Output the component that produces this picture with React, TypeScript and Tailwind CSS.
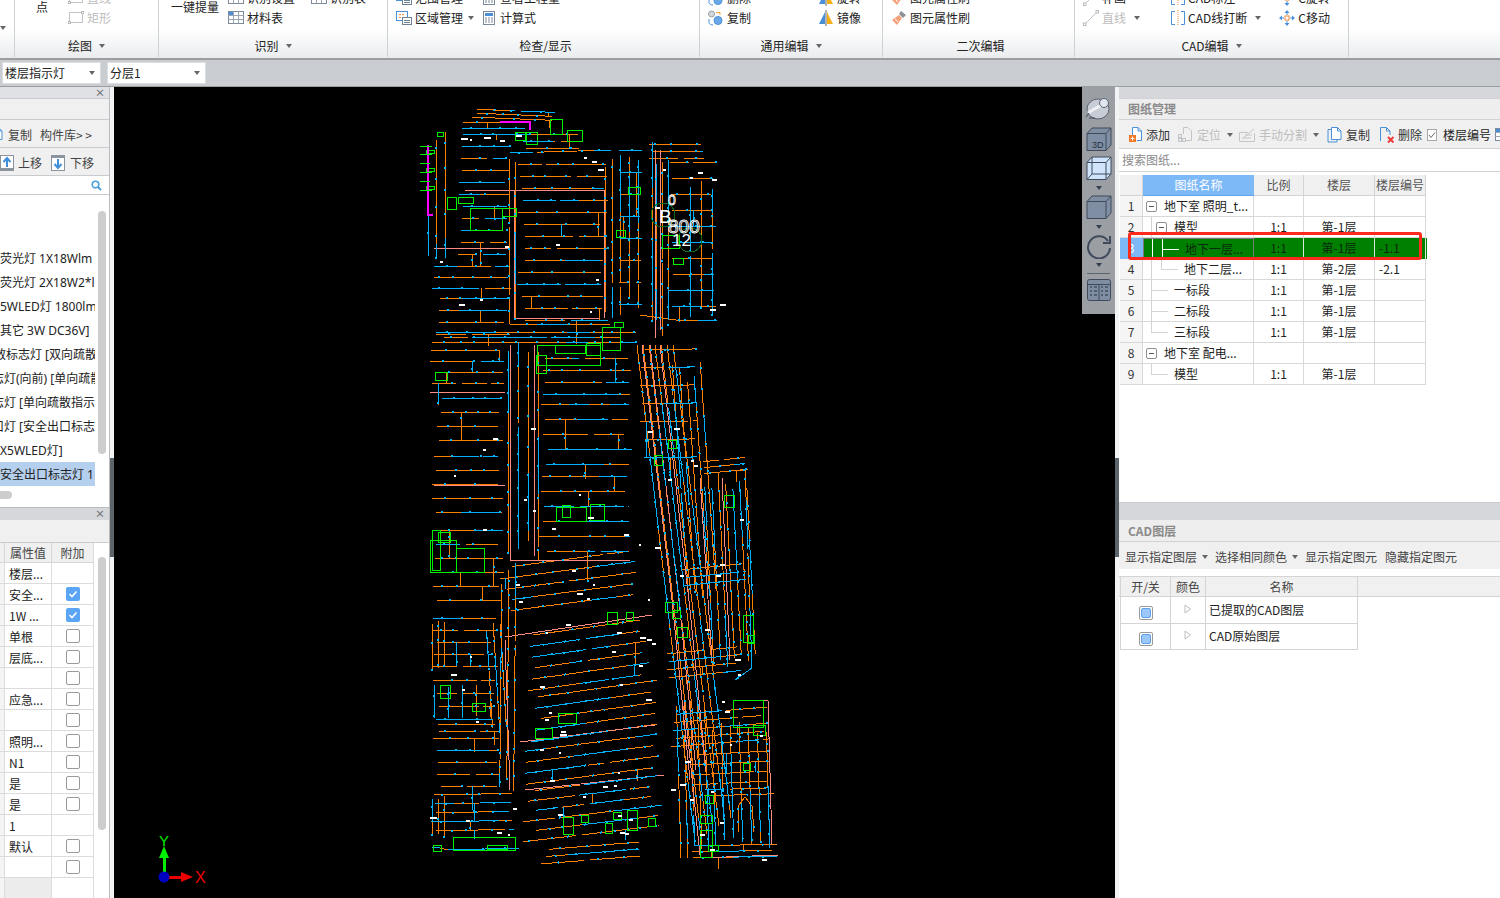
import type { ReactNode } from 'react';

// ---------- CAD drawing data ----------
let seed = 20240611;
const rnd = () => {
  seed = (seed + 0x6d2b79f5) | 0;
  let t = Math.imul(seed ^ (seed >>> 15), 1 | seed);
  t = (t + Math.imul(t ^ (t >>> 7), 61 | t)) ^ t;
  return ((t ^ (t >>> 14)) >>> 0) / 4294967296;
};

const paths = { orange: '', cyan: '', dash: '', pink: '', white: '' };
const seg = (x1: number, y1: number, x2: number, y2: number) =>
  `M${x1.toFixed(1)} ${y1.toFixed(1)}L${x2.toFixed(1)} ${y2.toFixed(1)}`;

function line(x1: number, y1: number, x2: number, y2: number) {
  const len = Math.hypot(x2 - x1, y2 - y1);
  const ux = (x2 - x1) / (len || 1);
  const uy = (y2 - y1) / (len || 1);
  let t = 0;
  while (t < len) {
    const s = Math.min(18 + rnd() * 50, len - t);
    const piece = seg(x1 + ux * t, y1 + uy * t, x1 + ux * (t + s), y1 + uy * (t + s));
    if (rnd() < 0.68) paths.orange += piece;
    else paths.cyan += piece;
    t += s + (rnd() < 0.16 ? 4 : 0);
  }
  t = 4 + rnd() * 16;
  while (t < len) {
    paths.dash += seg(x1 + ux * t, y1 + uy * t, x1 + ux * (t + 2), y1 + uy * (t + 2));
    t += 12 + rnd() * 20;
  }
}

function rows(x0: number, x1: number, y0: number, y1: number, step: number, tilt = 0) {
  for (let y = y0; y <= y1; y += step) {
    const a = x0 + rnd() * (x1 - x0) * 0.1;
    const b = x1 - rnd() * (x1 - x0) * 0.1;
    if (rnd() < 0.2) {
      const m = a + (b - a) * (0.35 + rnd() * 0.3);
      line(a, y + tilt * (a - x0), m - 3, y + tilt * (m - 3 - x0));
      line(m + 3, y + tilt * (m + 3 - x0), b, y + tilt * (b - x0));
    } else {
      line(a, y + tilt * (a - x0), b, y + tilt * (b - x0));
    }
    // short drops between the rows
    if (rnd() < 0.3) {
      const x = a + rnd() * (b - a);
      const yy = y + tilt * (x - x0);
      line(x, yy, x, yy + step * (1 + Math.floor(rnd() * 2)));
    }
  }
}

function verts(x0: number, x1: number, y0: number, y1: number, step: number, lean = 0) {
  for (let x = x0; x <= x1; x += step) {
    const a = y0 + rnd() * (y1 - y0) * 0.1;
    const b = y1 - rnd() * (y1 - y0) * 0.1;
    line(x + lean * (a - y0), a, x + lean * (b - y0), b);
  }
}

function pinkLine(pts: number[][]) {
  for (let i = 1; i < pts.length; i++) {
    paths.pink += seg(pts[i - 1][0], pts[i - 1][1], pts[i][0], pts[i][1]);
  }
}

function loop(pts: number[][]) {
  for (let i = 1; i < pts.length; i++) line(pts[i - 1][0], pts[i - 1][1], pts[i][0], pts[i][1]);
}

// top part
rows(470, 556, 109, 118, 4, 0.04);
rows(462, 530, 122, 134, 6, 0);
rows(520, 580, 134, 148, 7, 0);
rows(458, 510, 146, 262, 12);
rows(516, 608, 164, 322, 12);
rows(428, 512, 266, 292, 11);
rows(432, 510, 298, 345, 12);
rows(430, 505, 350, 392, 11);
rows(436, 505, 398, 452, 14);
rows(432, 505, 456, 524, 14);
rows(432, 505, 530, 612, 14);
rows(538, 632, 358, 400, 12);
rows(540, 632, 404, 470, 15);
rows(538, 634, 476, 562, 15);
// corridor rings
verts(509, 515, 152, 325, 6);
verts(605, 612, 150, 325, 7);
line(510, 153, 612, 150);
line(510, 324, 610, 324);
pinkLine([[514, 190], [514, 318], [600, 318]]);
pinkLine([[465, 190], [604, 190], [604, 318]]);
pinkLine([[434, 248], [508, 248]]);
verts(436, 452, 128, 262, 9);
verts(428, 428, 210, 260, 8);
verts(508, 538, 340, 562, 10);
pinkLine([[510, 345], [510, 560], [630, 560]]);
pinkLine([[534, 345], [534, 556]]);
pinkLine([[430, 392], [505, 392]]);
pinkLine([[434, 485], [505, 485]]);
// upper right tower
verts(652, 652, 140, 340, 10);
verts(656, 668, 145, 338, 6);
rows(648, 706, 144, 158, 7, 0);
rows(668, 716, 162, 320, 16);
verts(690, 716, 180, 322, 11);
rows(618, 642, 150, 322, 22);
verts(620, 640, 145, 315, 9);
loop([[640, 315], [676, 320], [717, 320]]);
pinkLine([[655, 150], [655, 338]]);
pinkLine([[660, 150], [660, 330]]);
// connector
rows(430, 640, 332, 342, 5);
// central tilted bands
rows(500, 640, 568, 622, 11, -0.13);
rows(526, 652, 636, 692, 11, -0.14);
rows(530, 658, 698, 748, 11, -0.14);
rows(520, 660, 752, 786, 11, -0.13);
rows(522, 662, 792, 846, 10, -0.12);
rows(540, 642, 850, 864, 7, -0.08);
verts(502, 520, 560, 800, 7, -0.01);
pinkLine([[505, 637], [652, 615]]);
pinkLine([[520, 742], [655, 725]]);
pinkLine([[525, 790], [664, 775]]);
pinkLine([[510, 790], [505, 640]]);
// lower left
rows(432, 498, 618, 670, 12);
rows(432, 500, 680, 720, 13);
rows(432, 502, 724, 744, 7);
rows(436, 502, 750, 790, 12);
rows(430, 515, 795, 838, 9, -0.02);
verts(432, 445, 620, 670, 6);
verts(432, 445, 795, 838, 6);
verts(486, 500, 620, 735, 7, 0.06);
verts(434, 496, 685, 718, 14);
loop([[432, 847], [440, 848], [448, 850], [520, 848]]);
// long corridor lines
for (let i = 0; i < 7; i++) {
  const x = 637 + i * 6;
  line(x, 345, x + 58, 842 - i * 4);
}
pinkLine([[642, 345], [672, 600], [690, 780]]);
pinkLine([[650, 345], [680, 610], [696, 770]]);
pinkLine([[660, 345], [690, 610], [706, 770]]);
// right wing
rows(640, 700, 350, 460, 18, -0.02);
verts(672, 704, 360, 600, 7, 0.07);
verts(704, 746, 470, 670, 7, 0.05);
rows(666, 742, 654, 684, 8, -0.1);
rows(700, 748, 462, 474, 6, -0.1);
rows(680, 748, 570, 592, 8, -0.1);
loop([[735, 470], [745, 470], [752, 668], [735, 680]]);
pinkLine([[700, 478], [712, 660]]);
pinkLine([[722, 478], [730, 660]]);
// lower right
verts(676, 706, 690, 860, 7, 0.03);
rows(668, 770, 715, 750, 8, -0.08);
rows(690, 770, 755, 786, 10, -0.05);
verts(712, 768, 720, 850, 9, 0.03);
rows(700, 775, 790, 796, 6, -0.03);
loop([[738, 832], [738, 806], [745, 797], [752, 806], [754, 832]]);
rows(690, 778, 846, 858, 6, -0.02);
pinkLine([[684, 700], [700, 855]]);
pinkLine([[700, 858], [778, 855]]);
pinkLine([[745, 700], [768, 700], [772, 845]]);

// specks of white symbols
const whiteSpots: number[][] = [
  [461, 139], [470, 140], [484, 138], [500, 141], [516, 136], [584, 158], [592, 162], [598, 170], [556, 245], [480, 300],
  [712, 180], [690, 178], [698, 173], [655, 208], [663, 170], [720, 305], [710, 310], [596, 280], [590, 312], [440, 262],
  [505, 247], [459, 305], [483, 450], [516, 585], [546, 633], [566, 625], [617, 633], [639, 666], [646, 700], [451, 675],
  [462, 690], [545, 720], [560, 735], [430, 818], [497, 833], [508, 835], [558, 815], [620, 833], [680, 785], [690, 800],
  [722, 702], [725, 712], [730, 745], [762, 860], [710, 850], [700, 835], [655, 548], [668, 480], [648, 432], [740, 520],
  [720, 565], [735, 660], [760, 736],
];
whiteSpots.forEach(([x, y]) => {
  paths.white += seg(x, y, x + 2 + rnd() * 5, y);
});
for (let i = 0; i < 50; i++) {
  const x = 440 + rnd() * 300;
  const y = 420 + rnd() * 420;
  paths.white += seg(x, y, x + 2 + rnd() * 4, y);
}

const greenRects: number[][] = [
  [470, 208, 32, 22], [447, 197, 9, 12], [458, 197, 15, 6], [502, 208, 14, 8], [628, 187, 12, 7], [616, 230, 9, 7], [673, 258, 10, 6],
  [662, 235, 17, 13], [602, 327, 18, 23], [614, 322, 9, 5], [537, 345, 63, 20], [586, 343, 14, 12], [515, 132, 10, 8], [526, 132, 11, 12],
  [550, 119, 12, 15], [567, 130, 15, 11], [435, 372, 12, 8], [430, 540, 26, 32], [456, 548, 28, 24], [438, 532, 12, 10], [556, 507, 30, 14],
  [590, 504, 14, 16], [440, 685, 10, 13], [472, 703, 13, 8], [558, 713, 18, 10], [535, 728, 17, 10], [453, 837, 62, 13], [563, 817, 10, 17],
  [581, 815, 7, 7], [605, 823, 7, 10], [613, 812, 8, 7], [627, 810, 10, 20], [648, 818, 7, 8], [733, 700, 30, 27], [753, 725, 12, 10],
  [743, 763, 7, 7], [607, 612, 10, 12], [626, 612, 7, 8], [677, 627, 10, 10], [743, 615, 10, 27], [700, 830, 12, 27], [665, 602, 12, 10],
  [654, 455, 8, 10], [668, 440, 8, 8], [724, 495, 10, 12], [536, 355, 10, 18], [562, 505, 8, 12], [433, 845, 8, 6], [487, 845, 20, 4],
  [705, 795, 8, 8], [700, 815, 12, 8], [708, 845, 10, 6], [672, 610, 8, 8], [748, 635, 6, 8], [437, 132, 6, 4], [426, 150, 8, 3],
  [426, 168, 8, 3], [426, 186, 8, 3], [432, 530, 8, 40], [555, 345, 30, 8],
];

// ---------- small parts ----------
const Caret = ({ className = '' }: { className?: string }) => (
  <span className={`inline-block w-0 h-0 border-l-[3.5px] border-r-[3.5px] border-t-[4px] border-l-transparent border-r-transparent border-t-[#666] ${className}`} />
);

const Ic = ({ children, w = 16 }: { children: ReactNode; w?: number }) => (
  <svg width={w} height={16} viewBox={`0 0 ${w} 16`} className="shrink-0 block" fill="none">
    {children}
  </svg>
);

const IconRect = () => (
  <Ic>
    <rect x="1.5" y="2.5" width="13" height="10" stroke="#c4c4c4" />
    <rect x="0.5" y="11.5" width="2" height="2" fill="#fff" stroke="#bbb" />
    <rect x="13.5" y="1.5" width="2" height="2" fill="#fff" stroke="#bbb" />
  </Ic>
);
const IconSheet = () => (
  <Ic>
    <rect x="0.5" y="1.5" width="15" height="12" fill="#fff" stroke="#7d8a99" />
    <path d="M0.5 5.5H15.5M0.5 9.5H15.5M5.5 1.5V13.5M10.5 1.5V13.5" stroke="#9aa5b1" />
    <rect x="1" y="2" width="4" height="3" fill="#4a90d9" />
  </Ic>
);
const IconArea = () => (
  <Ic>
    <rect x="0.5" y="1.5" width="11" height="9" stroke="#4a90d9" fill="#fff" />
    <path d="M3 4.5H9M3 7.5H9" stroke="#f08a3c" strokeDasharray="2 1" />
    <rect x="6.5" y="7.5" width="9" height="7" fill="#fff" stroke="#6f8296" />
    <path d="M8 10.5H14M8 12.5H14" stroke="#6f8296" />
  </Ic>
);
const IconCalc = () => (
  <Ic>
    <rect x="2.5" y="1.5" width="11" height="13" fill="#fff" stroke="#7d8a99" />
    <rect x="4" y="3" width="8" height="3" fill="#4a90d9" />
    <path d="M4 8H6M7 8H9M10 8H12M4 10H6M7 10H9M10 10H12M4 12H6M7 12H9M10 12H12" stroke="#7d8a99" />
  </Ic>
);
const IconCopyRound = () => (
  <Ic>
    <circle cx="3.5" cy="4" r="3" fill="#d5d8dc" stroke="#9aa0a6" />
    <circle cx="10" cy="10.5" r="4" fill="#6aa8e8" stroke="#4a90d9" />
    <path d="M8 2.5H12V5" stroke="#f0a030" />
    <path d="M1 9V12.5C1 14 3 15 5 15" stroke="#4a90d9" />
  </Ic>
);
const IconMirror = () => (
  <Ic>
    <path d="M7 2V14H1Z" fill="#4a90d9" />
    <path d="M9 2V14H15Z" fill="#f5b016" />
    <path d="M8 0V16" stroke="#666" />
  </Ic>
);
const IconBrush = () => (
  <Ic>
    <path d="M10 1L15 5L12 8L8 4Z" fill="#8c9298" />
    <path d="M8 5L11 8L6 15L1 10Z" fill="#f5a27a" />
    <path d="M4 9L7 12" stroke="#fff" />
  </Ic>
);
const IconLineGrey = () => (
  <Ic>
    <path d="M2 14L14 2" stroke="#c4c4c4" />
    <rect x="0.5" y="13" width="2.5" height="2.5" fill="#fff" stroke="#bbb" />
    <rect x="13" y="0.5" width="2.5" height="2.5" fill="#fff" stroke="#bbb" />
  </Ic>
);
const IconBreak = () => (
  <Ic w={14}>
    <path d="M4 1.5H0.5V14.5H4M10 1.5H13.5V14.5H10" stroke="#4a90d9" />
    <path d="M7 0V16" stroke="#f08a3c" strokeDasharray="1 1" />
  </Ic>
);
const IconMove = () => (
  <Ic>
    <rect x="6" y="6" width="4" height="4" fill="#fff" stroke="#f08a3c" />
    <path d="M8 0L10.5 3H5.5ZM8 16L5.5 13H10.5ZM0 8L3 5.5V10.5ZM16 8L13 10.5V5.5Z" fill="#4a90d9" />
    <path d="M8 3V5M8 11V13M3 8H5M11 8H13" stroke="#4a90d9" />
  </Ic>
);
const IconDocAdd = () => (
  <Ic w={15}>
    <path d="M4.5 8V0.5H10L13.5 4V13.5H9" fill="#fff" stroke="#4a90d9" />
    <path d="M10 0.5V4H13.5" stroke="#4a90d9" />
    <rect x="1" y="8" width="7" height="7" fill="#f0792a" />
    <path d="M4.5 9.5V13.5M2.5 11.5H6.5" stroke="#fff" />
  </Ic>
);
const IconDocGrey = () => (
  <Ic>
    <path d="M6.5 7V0.5H11L14.5 4V13.5H9" fill="none" stroke="#c2c5c8" />
    <rect x="1.5" y="7.5" width="3" height="3" stroke="#c2c5c8" />
    <rect x="1.5" y="11.5" width="3" height="3" stroke="#c2c5c8" />
    <rect x="5.5" y="11.5" width="3" height="3" stroke="#c2c5c8" />
  </Ic>
);
const IconSplit = () => (
  <Ic>
    <path d="M0.5 14.5V5.5L9 5.5M0.5 14.5H15.5V6" stroke="#c2c5c8" />
    <path d="M3 12L15 2M6 8H13M4 11H12" stroke="#c2c5c8" />
  </Ic>
);
const IconDocCopy = () => (
  <Ic w={15}>
    <path d="M4.5 2.5H1V15H10V13" stroke="#4a90d9" />
    <path d="M4.5 0.5H10.5L14 4V12.5H4.5Z" fill="#fff" stroke="#4a90d9" />
    <path d="M10.5 0.5V4H14" stroke="#4a90d9" />
  </Ic>
);
const IconDocDel = () => (
  <Ic>
    <path d="M1.5 14V0.5H7.5L11 4V8" stroke="#4a90d9" />
    <path d="M7.5 0.5V4H11" stroke="#4a90d9" />
    <path d="M9 10L14.5 15.5M14.5 10L9 15.5" stroke="#ee3b3b" strokeWidth="2" />
  </Ic>
);
const IconUpDown = ({ down = false }: { down?: boolean }) => (
  <Ic w={14}>
    <rect x="0.5" y="0.5" width="13" height="15" fill="#fff" stroke="#8a949e" />
    <rect x="0" y={down ? 0 : 13} width="14" height="3" fill="#8a949e" />
    <path d={down ? 'M7 4V13M3.5 9L7 13L10.5 9' : 'M7 12V3M3.5 7L7 3L10.5 7'} stroke="#3f8fdc" strokeWidth="2" />
  </Ic>
);
const IconSearch = () => (
  <svg width="11" height="11" viewBox="0 0 11 11" fill="none" className="block">
    <circle cx="4.5" cy="4.5" r="3.3" stroke="#4aa0d8" strokeWidth="1.6" />
    <path d="M7 7L10 10" stroke="#4aa0d8" strokeWidth="2" />
  </svg>
);

function Check({ on = false }: { on?: boolean }) {
  if (on) {
    return (
      <span className="flex w-[14px] h-[14px] items-center justify-center rounded-[2px] bg-[#5aa5f5]">
        <svg width="10" height="10" viewBox="0 0 10 10" fill="none">
          <path d="M1.5 5L4 7.5L8.5 2.5" stroke="#fff" strokeWidth="1.6" />
        </svg>
      </span>
    );
  }
  return <span className="block w-[14px] h-[14px] rounded-[2px] border border-[#9a9a9a] bg-white" />;
}

function Item({ icon, children, disabled, caret, tight, className = '' }: { icon?: ReactNode; children: ReactNode; disabled?: boolean; caret?: boolean; tight?: boolean; className?: string }) {
  return (
    <div className={`flex items-center h-[20px] gap-[3px] whitespace-nowrap ${disabled ? 'text-[#bdbdbd]' : 'text-[#222]'} ${className}`}>
      {icon}
      <span>{children}</span>
      {caret && <Caret className={tight ? 'ml-[2px]' : 'ml-[5px]'} />}
    </div>
  );
}

function RibbonGroup({ width, label, caret, children, labelPad = '' }: { width: string; label: string; caret?: boolean; children?: ReactNode; labelPad?: string }) {
  return (
    <div className={`${width} h-[57px] shrink-0 flex flex-col overflow-hidden border-r border-[#cfd1d4]`}>
      <div className="flex h-[40px] -mt-[12px] shrink-0">{children}</div>
      <div className={`flex items-center justify-center gap-[7px] h-[26px] mt-[5px] shrink-0 text-[#222] ${labelPad}`}>
        <span>{label}</span>
        {caret && <Caret />}
      </div>
    </div>
  );
}

function Ribbon() {
  return (
    <div className="flex h-[60px] overflow-hidden border-b-2 border-[#9b9d9f] bg-gradient-to-b from-white via-white to-[#eaecee]">
      <div className="w-[15px] h-[57px] shrink-0 border-r border-[#cfd1d4] pt-[16px]">
        <Caret className="block" />
      </div>
      <RibbonGroup width="w-[144px]" label="绘图" caret>
        <div className="ml-[21px] pt-[10px] leading-[18px] text-[#222]">点</div>
        <div className="ml-[20px]">
          <Item icon={<IconRect />} disabled>直线</Item>
          <Item icon={<IconRect />} disabled>矩形</Item>
        </div>
      </RibbonGroup>
      <RibbonGroup width="w-[229px]" label="识别" caret>
        <div className="ml-[12px] pt-[10px] leading-[18px] text-[#222]">一键提量</div>
        <div className="ml-[9px]">
          <Item icon={<IconSheet />}>识别设置</Item>
          <Item icon={<IconSheet />}>材料表</Item>
        </div>
        <div className="ml-[16px]">
          <Item icon={<IconSheet />}>识别表</Item>
        </div>
      </RibbonGroup>
      <RibbonGroup width="w-[312px]" label="检查/显示" labelPad="pl-[4px]">
        <div className="ml-[8px]">
          <Item icon={<IconArea />}>范围管理</Item>
          <Item icon={<IconArea />} caret tight>区域管理</Item>
        </div>
        <div className="ml-[7px]">
          <Item icon={<IconCalc />}>查看工程量</Item>
          <Item icon={<IconCalc />}>计算式</Item>
        </div>
      </RibbonGroup>
      <RibbonGroup width="w-[183px]" label="通用编辑" caret>
        <div className="ml-[8px]">
          <Item icon={<IconCopyRound />}>删除</Item>
          <Item icon={<IconCopyRound />}>复制</Item>
        </div>
        <div className="ml-[67px]">
          <Item icon={<IconMirror />}>旋转</Item>
          <Item icon={<IconMirror />}>镜像</Item>
        </div>
      </RibbonGroup>
      <RibbonGroup width="w-[192px]" label="二次编辑" labelPad="pl-[4px]">
        <div className="ml-[8px]">
          <Item icon={<IconBrush />}>图元属性刷</Item>
          <Item icon={<IconBrush />}>图元属性刷</Item>
        </div>
      </RibbonGroup>
      <RibbonGroup width="w-[274px]" label="CAD编辑" caret>
        <div className="ml-[8px]">
          <Item icon={<IconLineGrey />}>补画</Item>
          <Item icon={<IconLineGrey />} disabled caret>直线</Item>
        </div>
        <div className="ml-[31px]">
          <Item icon={<IconBreak />}>CAD标注</Item>
          <Item icon={<IconBreak />} caret>CAD线打断</Item>
        </div>
        <div className="ml-[18px]">
          <Item icon={<IconMove />}>C旋转</Item>
          <Item icon={<IconMove />}>C移动</Item>
        </div>
      </RibbonGroup>
    </div>
  );
}

function Select({ label }: { label: string }) {
  return (
    <div className="flex items-center justify-between w-[99px] h-[22px] pl-[2px] pr-[5px] bg-white border border-[#dcdde0] text-[#222]">
      <span>{label}</span>
      <Caret />
    </div>
  );
}

// ---------- left side ----------
const listItems: { text: string; shift: string; selected?: boolean }[] = [
  { text: '荧光灯 1X18Wlm', shift: 'ml-0' },
  { text: '荧光灯 2X18W2*l', shift: 'ml-0' },
  { text: '5WLED灯 1800lm', shift: 'ml-0' },
  { text: '其它 3W DC36V]', shift: 'ml-0' },
  { text: '散标志灯 [双向疏散', shift: '-ml-[6px]' },
  { text: '志灯(向前) [单向疏散', shift: '-ml-[8px]' },
  { text: '志灯 [单向疏散指示', shift: '-ml-[8px]' },
  { text: '口灯 [安全出口标志', shift: '-ml-[8px]' },
  { text: 'X5WLED灯]', shift: 'ml-0' },
  { text: '安全出口标志灯 1', shift: 'ml-0', selected: true },
];

const propRows: { value: string; check: 'none' | 'on' | 'off' }[] = [
  { value: '楼层...', check: 'none' },
  { value: '安全...', check: 'on' },
  { value: '1W ...', check: 'on' },
  { value: '单根', check: 'off' },
  { value: '层底...', check: 'off' },
  { value: '', check: 'off' },
  { value: '应急...', check: 'off' },
  { value: '', check: 'off' },
  { value: '照明...', check: 'off' },
  { value: 'N1', check: 'off' },
  { value: '是', check: 'off' },
  { value: '是', check: 'off' },
  { value: '1', check: 'none' },
  { value: '默认', check: 'off' },
  { value: '', check: 'off' },
];

function LeftPanel() {
  return (
    <div className="w-[110px] shrink-0 flex flex-col border-r border-[#b9bbbf] bg-white overflow-hidden">
      <div className="flex items-center justify-end h-[11px] pr-[4px] bg-[#dfe1e5] text-[10px] leading-none text-[#777] font-bold">×</div>
      <div className="h-[22px] bg-[#f0f0f0] border-t border-b border-[#c9cbce]" />
      <div className="flex items-center h-[28px] pt-[2px] bg-[#f0f0f0] border-b border-[#c9cbce] text-[#444] whitespace-nowrap">
        <span className="-ml-[12px]"><IconDocCopy /></span>
        <span className="ml-[5px]">复制</span>
        <span className="ml-[8px]">构件库&gt; &gt;</span>
      </div>
      <div className="flex items-center h-[28px] pt-[2px] bg-[#f0f0f0] border-b border-[#c9cbce] text-[#444]">
        <IconUpDown />
        <span className="ml-[4px]">上移</span>
        <span className="ml-[9px]"><IconUpDown down /></span>
        <span className="ml-[5px]">下移</span>
      </div>
      <div className="flex items-center justify-end h-[19px] pr-[7px] bg-white border-b border-[#c9cbce]">
        <IconSearch />
      </div>
      <div className="flex h-[313px] bg-white border-b border-[#b9bbbf]">
        <div className="w-[95px] shrink-0 pt-[51px] overflow-hidden [font-family:'Noto_Sans','Noto_Sans_CJK_SC',sans-serif]">
          {listItems.map((item) => (
            <div key={item.text} className={`h-[24px] leading-[26px] whitespace-nowrap text-[#222] ${item.selected ? 'bg-[#b5cfee]' : ''}`}>
              <div className={item.shift}>{item.text}</div>
            </div>
          ))}
          <div className="w-[12px] h-[8px] mt-[5px] rounded-r-[4px] bg-[#cdcdcd]" />
        </div>
        <div className="w-[8px] h-[243px] mt-[16px] ml-[3px] rounded-[4px] bg-[#cdcdcd]" />
      </div>
      <div className="flex items-center justify-end h-[12px] pr-[4px] bg-[#d5d7db] text-[10px] leading-none text-[#777] font-bold">×</div>
      <div className="h-[23px] bg-[#f0f0f0] border-b border-[#c9cbce]" />
      <div className="flex flex-1 min-h-0">
        <div className="w-[94px] shrink-0 border-r border-[#dcdcdc]">
          <div className="grid grid-cols-[5px_47px_41px] h-[20px] leading-[20px] bg-[#f0f0f0] border-b border-[#d6d6d6] text-[#444] text-center">
            <div className="border-r border-[#d6d6d6]" />
            <div className="border-r border-[#d6d6d6]">属性值</div>
            <div>附加</div>
          </div>
          {propRows.map((row, i) => (
            <div key={i} className="grid grid-cols-[5px_47px_41px] h-[21px] leading-[21px] border-b border-[#dcdcdc] text-[#222]">
              <div className="border-r border-[#dcdcdc] bg-[#f4f4f4]" />
              <div className="border-r border-[#dcdcdc] pl-[4px] whitespace-nowrap overflow-hidden">{row.value}</div>
              <div className="flex items-center justify-center">
                {row.check !== 'none' && <Check on={row.check === 'on'} />}
              </div>
            </div>
          ))}
          <div className="grid grid-cols-[5px_47px_41px] h-[20px]">
            <div className="border-r border-[#dcdcdc] bg-[#f4f4f4]" />
            <div className="border-r border-[#dcdcdc] bg-[#ececec]" />
            <div />
          </div>
        </div>
        <div className="w-[8px] h-[273px] mt-[14px] ml-[4px] rounded-[4px] bg-[#cdcdcd]" />
      </div>
    </div>
  );
}

const Gutter = () => (
  <div className="w-[4px] shrink-0 bg-[#f2f3f4]">
    <div className="h-[99px] mt-[371px] bg-[#5c646c]" />
  </div>
);

// ---------- canvas ----------
function CadDrawing() {
  return (
    <svg viewBox="114 87 1001 811" width="1001" height="811" className="block" fill="none" shapeRendering="crispEdges">
      <path d={paths.orange} stroke="#ff8000" />
      <path d={paths.pink} stroke="#ff8a80" />
      <path d={paths.cyan} stroke="#00b0ff" />
      <path d={paths.dash} stroke="#00b8ff" strokeWidth="2" />
      {greenRects.map(([x, y, w, h], i) => (
        <rect key={i} x={x + 0.5} y={y + 0.5} width={w} height={h} stroke="#00f000" strokeWidth="1.5" />
      ))}
      <path d="M428 145V215H433M500 122H530V130" stroke="#ff00ff" strokeWidth="1.5" />
      <path d="M420 146H432M420 154H432M420 163H430M420 172H432M420 181H430M420 190H432" stroke="#00ee00" />
      <path d={paths.white} stroke="#fff" strokeWidth="2" />
      <circle cx="663" cy="215" r="12" stroke="#0a6a1a" />
      <circle cx="690" cy="240" r="12" stroke="#0a6a1a" />
      <g fontFamily="'Liberation Sans', sans-serif" fill="#fff" shapeRendering="auto">
        <text x="659" y="223" fontSize="19">B</text>
        <text x="668" y="233" fontSize="19" fill="none" stroke="#fff" strokeWidth="0.9">800</text>
        <text x="672" y="246" fontSize="17">12</text>
        <text x="668" y="205" fontSize="14" fill="none" stroke="#fff" strokeWidth="0.8">0</text>
      </g>
      {/* axis marker */}
      <path d="M164 876V850" stroke="#00ee00" strokeWidth="3" />
      <path d="M164 846L169 858H159Z" fill="#00ee00" shapeRendering="auto" />
      <path d="M164 877H185" stroke="#ee0000" strokeWidth="3" />
      <path d="M193 877L181 872V882Z" fill="#ee0000" shapeRendering="auto" />
      <circle cx="164" cy="877" r="5.5" fill="#0000c0" shapeRendering="auto" />
      <text x="159" y="846" fontSize="15" fill="#00ee00" fontFamily="'Liberation Sans', sans-serif" shapeRendering="auto">Y</text>
      <text x="195" y="883" fontSize="16" fill="#ee0000" fontFamily="'Liberation Sans', sans-serif" shapeRendering="auto">X</text>
    </svg>
  );
}

function ViewTools() {
  const cubeLine = '#3f4b5c';
  const arrow = <Caret className="border-t-[#33404f]" />;
  return (
    <div className="absolute right-0 top-0 w-[33px] h-[227px] flex flex-col items-center pt-[10px] bg-[#9b9ea3]">
      <svg width="28" height="24" viewBox="0 0 28 24" fill="none">
        <ellipse cx="13" cy="12" rx="11" ry="10" fill="#c8ccd4" stroke="#5a6472" />
        <path d="M3 16C8 12 15 9 21 6" stroke="#eef0f4" strokeWidth="3" />
        <circle cx="19" cy="6" r="4.5" fill="#dfe6ee" stroke="#5a6472" />
        <path d="M1 20L4 16M4 21H10" stroke="#3f4b5c" />
      </svg>
      <svg width="26" height="24" viewBox="0 0 26 24" fill="none" className="mt-[6px]">
        <path d="M1 6.5L6 1H25V18L20 23.5H1Z" fill="#7f8ea3" stroke={cubeLine} />
        <path d="M1 6.5H20V23.5M20 6.5L25 1" stroke={cubeLine} />
        <text x="6" y="21" fontSize="9" fill="#26303c" fontFamily="'Liberation Sans', sans-serif">3D</text>
      </svg>
      <svg width="26" height="24" viewBox="0 0 26 24" fill="none" className="mt-[5px]">
        <path d="M1 6.5L6 1H25V18L20 23.5H1Z" fill="#cfe4fb" stroke={cubeLine} />
        <path d="M1 6.5H20V23.5M20 6.5L25 1M6 1V18H25M6 18L1 23.5" stroke={cubeLine} />
      </svg>
      <div className="h-[15px] flex items-center">{arrow}</div>
      <svg width="26" height="24" viewBox="0 0 26 24" fill="none">
        <path d="M1 6.5L6 1H25V18L20 23.5H1Z" fill="#7f8ea3" stroke={cubeLine} />
        <path d="M1 6.5H20V23.5M20 6.5L25 1" stroke={cubeLine} />
      </svg>
      <div className="h-[16px] flex items-center">{arrow}</div>
      <svg width="26" height="24" viewBox="0 0 26 24" fill="none">
        <path d="M22 6A11 11 0 1 0 24 13" stroke={cubeLine} strokeWidth="2" />
        <path d="M24 1V8H17" stroke={cubeLine} strokeWidth="2" />
      </svg>
      <div className="h-[12px] flex items-center">{arrow}</div>
      <div className="w-[23px] h-px mt-[2px] bg-[#5c636b] mb-[4px]" />
      <svg width="24" height="24" viewBox="0 0 24 24" fill="none">
        <rect x="0.5" y="1.5" width="23" height="21" rx="2" fill="#7f8ea3" stroke={cubeLine} />
        <path d="M0.5 6.5H23.5M12 6.5V22.5" stroke={cubeLine} />
        <path d="M3 9H5M7 9H10M3 13H5M7 13H10M3 17H5M7 17H10M14 9H16M18 9H21M14 13H16M18 13H21M14 17H16M18 17H21" stroke="#26303c" />
      </svg>
    </div>
  );
}

// ---------- right side ----------
const gridCols = 'grid grid-cols-[23px_111px_50px_71px_51px]';
const drawingRows: { name: string; indent: string; box?: string; scale?: string; floor?: string; code?: string; tree?: string; active?: boolean }[] = [
  { name: '地下室 照明_t...', indent: 'pl-[21px]', box: 'ml-[3px]' },
  { name: '模型', indent: 'pl-[31px]', box: 'ml-[13px]', scale: '1:1', floor: '第-1层', tree: 'M8.5 0V21' },
  { name: '地下一层...', indent: 'pl-[41px]', scale: '1:1', floor: '第-1层', code: '-1.1', tree: 'M8.5 0V21M18.5 0V21M18.5 10.5H35', active: true },
  { name: '地下二层...', indent: 'pl-[41px]', scale: '1:1', floor: '第-2层', code: '-2.1', tree: 'M8.5 0V21M18.5 0V10.5H35' },
  { name: '一标段', indent: 'pl-[31px]', scale: '1:1', floor: '第-1层', tree: 'M8.5 0V21M8.5 10.5H25' },
  { name: '二标段', indent: 'pl-[31px]', scale: '1:1', floor: '第-1层', tree: 'M8.5 0V21M8.5 10.5H25' },
  { name: '三标段', indent: 'pl-[31px]', scale: '1:1', floor: '第-1层', tree: 'M8.5 0V10.5H25' },
  { name: '地下室 配电...', indent: 'pl-[21px]', box: 'ml-[3px]' },
  { name: '模型', indent: 'pl-[31px]', scale: '1:1', floor: '第-1层', tree: 'M8.5 0V10.5H25' },
];

function MinusBox() {
  return (
    <svg width="11" height="11" viewBox="0 0 11 11" fill="none" className="block">
      <rect x="0.5" y="0.5" width="10" height="10" rx="1.5" fill="#fff" stroke="#8e8e8e" />
      <path d="M3 5.5H8" stroke="#555" />
    </svg>
  );
}

function DrawingTable() {
  const headCell = 'text-center border-r border-b border-[#d4d4d4] bg-[#f0f0f0] text-[#555]';
  return (
    <div className="relative w-[307px] mt-[3px]">
      <div className={`${gridCols} h-[21px] leading-[20px]`}>
        <div className={headCell} />
        <div className="text-center bg-[#7db8f7] text-white border-b border-[#5fa4ec]">图纸名称</div>
        <div className={headCell}>比例</div>
        <div className={headCell}>楼层</div>
        <div className={headCell}>楼层编号</div>
      </div>
      {drawingRows.map((row, i) => {
        const border = row.active ? 'border-r border-[#d8e8d8]' : 'border-r border-b border-[#d8d8d8]';
        return (
          <div key={i} className={`${gridCols} h-[21px] leading-[20px] ${row.active ? 'bg-[#008000] text-[#0b2a0b]' : 'text-[#222]'}`}>
            <div className={`text-center border-r border-b ${row.active ? 'bg-[#7db8f7] text-white border-[#7db8f7]' : 'bg-[#f5f5f5] border-[#d8d8d8] text-[#333]'}`}>{i + 1}</div>
            <div className={`relative whitespace-nowrap overflow-hidden ${row.indent} ${row.active ? 'border border-[#7a7a7a]' : border}`}>
              {row.tree && (
                <svg width="60" height="21" viewBox="0 0 60 21" fill="none" className="absolute left-0 top-0">
                  <path d={row.tree} stroke={row.active ? '#ffffff' : '#d4d4d4'} shapeRendering="crispEdges" />
                </svg>
              )}
              {row.box && (
                <span className={`absolute top-[5px] left-0 ${row.box}`}>
                  <MinusBox />
                </span>
              )}
              <span className="relative">{row.name}</span>
            </div>
            <div className={`text-center ${border}`}>{row.scale}</div>
            <div className={`text-center ${border}`}>{row.floor}</div>
            <div className={`pl-[4px] ${border}`}>{row.code}</div>
          </div>
        );
      })}
      {/* hand-drawn highlight over the selected row */}
      <div className="absolute left-[8px] top-[57px] w-[294px] h-[28px] rounded-[3px] border-[3px] border-[#ff2a1e]" />
    </div>
  );
}

function LayerToggle() {
  return (
    <span className="flex items-center justify-center w-[14px] h-[14px] rounded-[2px] border border-[#9a9a9a] bg-white mt-[9px]">
      <span className="block w-[10px] h-[10px] rounded-[2px] bg-[#9cc7fa] border border-[#5ea2ee]" />
    </span>
  );
}

function PlayMark() {
  return (
    <svg width="8" height="10" viewBox="0 0 8 10" fill="none" className="-mt-[2px]">
      <path d="M1 1L6.5 5L1 9Z" fill="#fff" stroke="#bdbdbd" />
    </svg>
  );
}

function RightPanel() {
  const layerCols = 'grid grid-cols-[51px_35px_152px]';
  return (
    <div className="flex-1 min-w-0 flex flex-col bg-white overflow-hidden">
      <div className="h-[11px] bg-[#d5d7db]" />
      <div className="flex items-center h-[22px] pl-[9px] bg-[#eeeeee] border-t border-b border-[#d0d2d5] font-bold text-[#8a8a8a]">图纸管理</div>
      <div className="flex items-center h-[28px] pt-[2px] pl-[9px] bg-[#f0f0f0] whitespace-nowrap text-[#333]">
        <IconDocAdd />
        <span className="ml-[3px]">添加</span>
        <span className="ml-[7px]"><IconDocGrey /></span>
        <span className="ml-[4px] text-[#bdbdbd]">定位</span>
        <Caret className="ml-[6px]" />
        <span className="ml-[6px]"><IconSplit /></span>
        <span className="ml-[4px] text-[#bdbdbd]">手动分割</span>
        <Caret className="ml-[6px]" />
        <span className="ml-[8px]"><IconDocCopy /></span>
        <span className="ml-[4px]">复制</span>
        <span className="ml-[9px]"><IconDocDel /></span>
        <span className="ml-[3px]">删除</span>
        <span className="ml-[5px] flex items-center justify-center w-[12px] h-[12px] border border-[#a8a8a8] bg-white">
          <svg width="8" height="8" viewBox="0 0 8 8" fill="none">
            <path d="M1 4L3 6.5L7 1.5" stroke="#666" />
          </svg>
        </span>
        <span className="ml-[6px] text-[#222]">楼层编号</span>
        <span className="ml-[4px]"><IconSheet /></span>
      </div>
      <div className="flex items-center h-[24px] pl-[3px] bg-white border-t border-b border-[#d0d2d5] text-[#8a8a8a]">搜索图纸...</div>
      <div className="h-[331px] pl-px border-b border-[#c9cbce] overflow-hidden">
        <DrawingTable />
      </div>
      <div className="h-[17px] bg-[#d5d7db]" />
      <div className="flex items-center h-[22px] pl-[9px] bg-[#eeeeee] border-b border-[#d0d2d5] font-bold text-[#8a8a8a]">CAD图层</div>
      <div className="flex items-center h-[27px] pt-[2px] pl-[6px] bg-[#f0f0f0] whitespace-nowrap text-[#444]">
        <span>显示指定图层</span>
        <Caret className="ml-[5px]" />
        <span className="ml-[7px]">选择相同颜色</span>
        <Caret className="ml-[5px]" />
        <span className="ml-[7px]">显示指定图元</span>
        <span className="ml-[8px]">隐藏指定图元</span>
      </div>
      <div className="h-[7px] bg-white" />
      <div className="h-[21px] bg-[#f0f0f0] border-t border-b border-[#d4d4d4]">
        <div className={`${layerCols} w-[239px] ml-px leading-[19px] text-center text-[#444]`}>
          <div className="border-l border-r border-[#d4d4d4]">开/关</div>
          <div className="border-r border-[#d4d4d4]">颜色</div>
          <div className="border-r border-[#d4d4d4]">名称</div>
        </div>
      </div>
      {['已提取的CAD图层', 'CAD原始图层'].map((name) => (
        <div key={name} className={`${layerCols} w-[239px] ml-px h-[26px] text-[#222]`}>
          <div className="flex justify-center border-l border-r border-b border-[#d4d4d4]"><LayerToggle /></div>
          <div className="flex items-center justify-center border-r border-b border-[#d4d4d4]"><PlayMark /></div>
          <div className="pl-[3px] leading-[26px] border-r border-b border-[#d4d4d4]">{name}</div>
        </div>
      ))}
    </div>
  );
}

export default function App() {
  return (
    <div className="w-[1500px] h-[898px] flex flex-col overflow-hidden bg-white text-[12px] [font-family:'Noto_Sans_CJK_SC','Noto_Sans',sans-serif]">
      <Ribbon />
      <div className="flex items-center gap-[6px] h-[27px] pl-[2px] shrink-0 bg-[#c9ccd1] border-b border-[#9b9d9f]">
        <Select label="楼层指示灯" />
        <Select label="分层1" />
      </div>
      <div className="flex flex-1 min-h-0">
        <LeftPanel />
        <Gutter />
        <div className="relative w-[1001px] shrink-0 bg-black overflow-hidden">
          <CadDrawing />
          <ViewTools />
        </div>
        <Gutter />
        <RightPanel />
      </div>
    </div>
  );
}
